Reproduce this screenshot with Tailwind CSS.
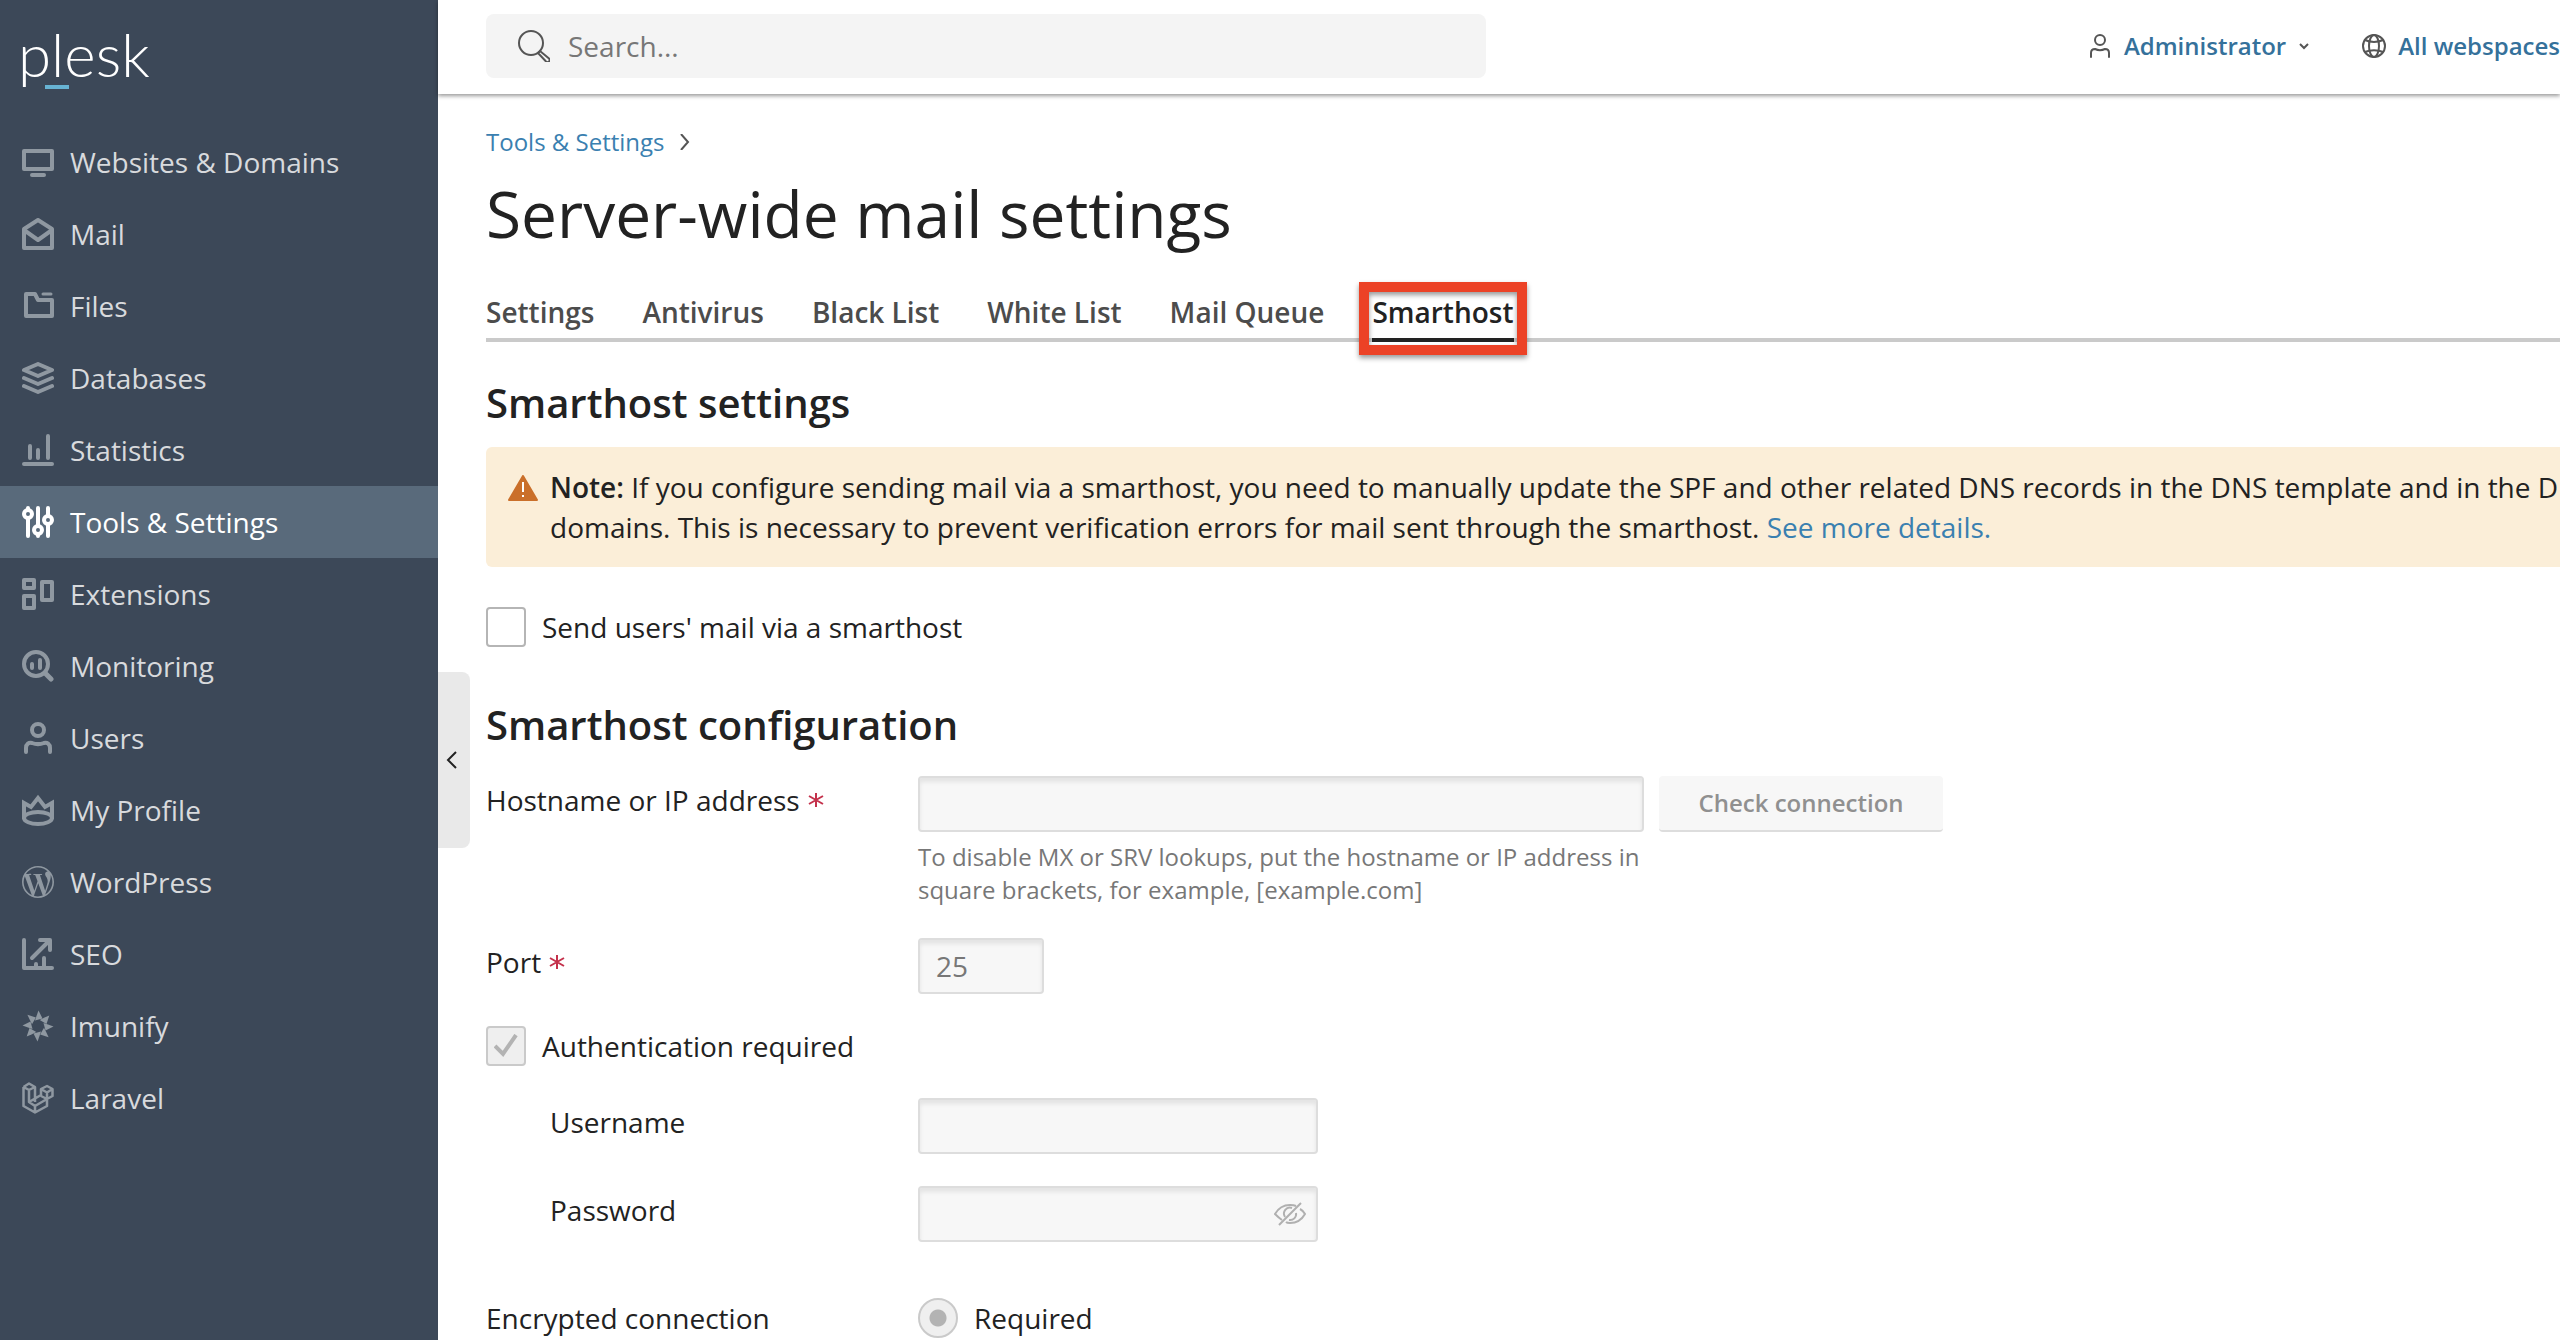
<!DOCTYPE html>
<html lang="en">
<head>
    <meta charset="UTF-8">
    <meta name="viewport" content="width=device-width, initial-scale=1.0">
    <title>Server-wide mail settings</title>
    <script src="https://cdn.jsdelivr.net/npm/@tailwindcss/browser@4"></script>
</head>
<body class="flex h-screen overflow-hidden bg-white font-['Open_Sans',sans-serif] text-[28px] leading-[40px] text-[#222222]">
    <aside class="relative w-[438px] shrink-0 bg-[#3c4858] text-[#d8dadd]">
        <a href="#" class="relative block h-[126px] pt-5 pl-[18px] font-['Lato',sans-serif] text-[60px] leading-[68px] font-light text-white">plesk<span class="absolute left-[45px] top-[85px] h-1 w-6 bg-[#67b3d3]"></span></a>
        <nav>
            <a href="#" class="flex h-[72px] items-center gap-4 pl-[22px]">
                <svg class="size-8 text-[#8f98a1]" viewBox="0 0 32 32" fill="none" stroke="currentColor" stroke-width="4" stroke-linejoin="round" stroke-linecap="round"><path d="M2 5h28v18H2zM10 29h12"/></svg>
                Websites &amp; Domains
            </a>
            <a href="#" class="flex h-[72px] items-center gap-4 pl-[22px]">
                <svg class="size-8 text-[#8f98a1]" viewBox="0 0 32 32" fill="none" stroke="currentColor" stroke-width="4" stroke-linejoin="round"><path d="M2 11 16 2l14 9v19H2zM2 12l14 10 14-10"/></svg>
                Mail
            </a>
            <a href="#" class="flex h-[72px] items-center gap-4 pl-[22px]">
                <svg class="size-8 text-[#8f98a1]" viewBox="0 0 32 32" fill="none" stroke="currentColor" stroke-width="4" stroke-linejoin="round" stroke-linecap="round"><path d="M4 4h9l3 6h14v16H4z"/><path stroke-width="3" d="M21 4h8"/></svg>
                Files
            </a>
            <a href="#" class="flex h-[72px] items-center gap-4 pl-[22px]">
                <svg class="size-8 text-[#8f98a1]" viewBox="0 0 32 32" fill="none" stroke="currentColor" stroke-width="4" stroke-linejoin="round" stroke-linecap="round"><path d="M2 8l14-6 14 6-14 6zM2 16l14 6 14-6M2 24l14 6 14-6"/></svg>
                Databases
            </a>
            <a href="#" class="flex h-[72px] items-center gap-4 pl-[22px]">
                <svg class="size-8 text-[#8f98a1]" viewBox="0 0 32 32" fill="none" stroke="currentColor" stroke-width="4" stroke-linecap="round"><path d="M2 30h28M8 12v12M16 16v8M26 2v22"/></svg>
                Statistics
            </a>
            <a href="#" class="flex h-[72px] items-center gap-4 bg-[#596a7b] pl-[22px] text-white">
                <svg class="size-8" viewBox="0 0 32 32" fill="none" stroke="currentColor" stroke-width="4" stroke-linecap="round"><path d="M6 2v1M6 13v17M16 2v17M16 29v1M26 2v7M26 19v11"/><circle cx="6" cy="8" r="4"/><circle cx="16" cy="24" r="4"/><circle cx="26" cy="14" r="4"/></svg>
                Tools &amp; Settings
            </a>
            <a href="#" class="flex h-[72px] items-center gap-4 pl-[22px]">
                <svg class="size-8 text-[#8f98a1]" viewBox="0 0 32 32" fill="none" stroke="currentColor" stroke-width="4" stroke-linejoin="round"><path d="M2 2h10v8H2zM2 18h10v12H2zM20 4h10v18H20z"/></svg>
                Extensions
            </a>
            <a href="#" class="flex h-[72px] items-center gap-4 pl-[22px]">
                <svg class="size-8 text-[#8f98a1]" viewBox="0 0 32 32" fill="none" stroke="currentColor" stroke-width="4" stroke-linecap="round"><circle cx="14" cy="14" r="12"/><path d="M10 14v4M18 10v8"/><path stroke-width="5" d="M24 24l5 5"/></svg>
                Monitoring
            </a>
            <a href="#" class="flex h-[72px] items-center gap-4 pl-[22px]">
                <svg class="size-8 text-[#8f98a1]" viewBox="0 0 32 32" fill="none" stroke="currentColor" stroke-width="4" stroke-linecap="round"><circle cx="16" cy="8" r="6"/><path d="M4 30v-4c0-4 3-6 6-5 4 1.500 8 1.500 12 0 3-1 6 1 6 5v4"/></svg>
                Users
            </a>
            <a href="#" class="flex h-[72px] items-center gap-4 pl-[22px]">
                <svg class="size-8 text-[#8f98a1]" viewBox="0 0 32 32" fill="none" stroke="currentColor" stroke-width="4"><path d="M2 25V9l7 4 7-9 7 9 7-4v16"/><ellipse cx="16" cy="24" rx="14" ry="6"/></svg>
                My Profile
            </a>
            <a href="#" class="flex h-[72px] items-center gap-4 pl-[22px]">
                <svg class="size-8 text-[#8f98a1]" viewBox="0 0 24 24" fill="currentColor"><path d="M21.469 6.825c.84 1.537 1.318 3.3 1.318 5.175 0 3.979-2.156 7.456-5.363 9.325l3.295-9.527c.615-1.54.82-2.771.82-3.864 0-.405-.026-.78-.07-1.11m-7.981.105c.647-.03 1.232-.105 1.232-.105.582-.075.514-.93-.067-.899 0 0-1.755.135-2.88.135-1.064 0-2.85-.15-2.85-.15-.585-.03-.661.855-.075.885 0 0 .54.061 1.125.09l1.68 4.605-2.37 7.08L5.354 6.9c.649-.03 1.234-.1 1.234-.1.585-.075.516-.93-.065-.896 0 0-1.746.138-2.874.138-.2 0-.438-.008-.69-.015C4.911 3.15 8.235 1.215 12 1.215c2.809 0 5.365 1.072 7.286 2.833-.046-.003-.091-.009-.141-.009-1.06 0-1.812.923-1.812 1.914 0 .89.513 1.643 1.06 2.531.411.72.89 1.643.89 2.977 0 .915-.354 1.994-.821 3.479l-1.075 3.585-3.9-11.61.001.014zM12 22.784c-1.059 0-2.081-.153-3.048-.437l3.237-9.406 3.315 9.087c.024.053.05.101.078.149-1.12.393-2.325.609-3.582.609M1.211 12c0-1.564.336-3.05.935-4.39L7.29 21.709C3.694 19.96 1.212 16.271 1.211 12M12 0C5.385 0 0 5.385 0 12s5.385 12 12 12 12-5.385 12-12S18.615 0 12 0"/></svg>
                WordPress
            </a>
            <a href="#" class="flex h-[72px] items-center gap-4 pl-[22px]">
                <svg class="size-8 text-[#8f98a1]" viewBox="0 0 32 32" fill="none" stroke="currentColor" stroke-width="4" stroke-linejoin="round" stroke-linecap="round"><path d="M2 2v28h28M18 2h10v10M27 3 10 20M14 26v3M22 20v9"/></svg>
                SEO
            </a>
            <a href="#" class="flex h-[72px] items-center gap-4 pl-[22px]">
                <svg class="size-8 text-[#8f98a1]" viewBox="-16 -16 32 32" fill="currentColor">
                    <path id="ray" d="M.5-15.500 4.500-7.500-3-5.500-1.500-10z"/>
                    <use href="#ray" transform="rotate(45)"/><use href="#ray" transform="rotate(90)"/><use href="#ray" transform="rotate(135)"/><use href="#ray" transform="rotate(180)"/><use href="#ray" transform="rotate(225)"/><use href="#ray" transform="rotate(270)"/><use href="#ray" transform="rotate(315)"/>
                </svg>
                Imunify
            </a>
            <a href="#" class="flex h-[72px] items-center gap-4 pl-[22px]">
                <svg class="size-8 text-[#8f98a1]" viewBox="0 0 32 32" fill="none" stroke="currentColor" stroke-width="2.500" stroke-linejoin="round"><path d="M1.500 5 7 1.500 13 5v15M1.500 5v19l11.500 6.500L25 24v-7M1.500 5 7 8l6-3M7 8v12l6 4 12-7M7 20l12-7M13 24v6M19 14V7l6-3 5.500 3v7L25 17l-6-3M19 7l6 3.500L30.500 7M25 10v7"/></svg>
                Laravel
            </a>
        </nav>
    </aside>

    <div class="relative flex min-w-0 flex-1 flex-col">
        <button type="button" aria-label="Collapse sidebar" class="absolute left-0 top-[672px] flex h-44 w-8 items-center rounded-r-lg bg-[#e9e9e9] pl-2">
            <svg class="h-5 w-3" viewBox="0 0 12 20" fill="none" stroke="#222222" stroke-width="2"><path d="M10 2 2 10l8 8"/></svg>
        </button>

        <header class="flex h-[94px] shrink-0 items-center justify-between pb-0.5 pl-12 shadow-[0_2px_4px_rgba(0,0,0,0.4)]">
            <label class="flex h-16 w-[1000px] items-center gap-[18px] rounded-lg bg-[#f4f4f4] pl-8">
                <svg class="size-8" viewBox="0 0 32 32" fill="none" stroke="#555555" stroke-width="2"><circle cx="13" cy="13" r="12"/><path d="M20 23l2-2 9 7.500a2 2 0 0 1-3 3z"/></svg>
                <input type="search" placeholder="Search..." aria-label="Search" class="flex-1 bg-transparent outline-none placeholder:text-[#777777]">
            </label>
            <div class="flex shrink-0 items-center text-2xl font-semibold text-[#35719b]">
                <button type="button" class="flex items-center">
                    <svg class="mr-3 size-6" viewBox="0 0 24 24" fill="none" stroke="#555555" stroke-width="2" stroke-linecap="round"><circle cx="12" cy="6" r="5"/><path d="M3 23v-4c0-3 2-4 4-4 3 1.500 7 1.500 10 0 2 0 4 1 4 4v4"/></svg>
                    Administrator
                    <svg class="ml-3 size-3" viewBox="0 0 12 12" fill="none" stroke="#555555" stroke-width="2"><path d="M2 4l4 4 4-4"/></svg>
                </button>
                <a href="#" class="ml-13 flex items-center gap-3">
                    <svg class="size-6" viewBox="0 0 24 24" fill="none" stroke="#555555" stroke-width="2"><circle cx="12" cy="12" r="11"/><ellipse cx="12" cy="12" rx="5" ry="11"/><path d="M3 6c5 2.500 13 2.500 18 0M3 18c5-2.500 13-2.500 18 0"/></svg>
                    All webspaces
                </a>
            </div>
        </header>

        <main class="pl-12">
            <div class="mt-7 flex items-center gap-3.5 text-2xl leading-10">
                <a href="#" class="text-[#3a80b0]">Tools &amp; Settings</a>
                <svg class="h-4 w-3" viewBox="0 0 12 16" fill="none" stroke="#555555" stroke-width="2"><path d="M2 0l7 8-7 8"/></svg>
            </div>
            <h1 class="mt-3 text-[64px] leading-[80px]">Server-wide mail settings</h1>

            <nav class="mt-[38px] flex gap-12 border-b-4 border-[#cacaca] font-semibold text-[#4c4c4c]">
                <a href="#" class="pb-1.5">Settings</a>
                <a href="#" class="pb-1.5">Antivirus</a>
                <a href="#" class="pb-1.5">Black List</a>
                <a href="#" class="pb-1.5">White List</a>
                <a href="#" class="pb-1.5">Mail Queue</a>
                <a href="#" class="relative -mb-1 border-b-4 border-[#222222] pb-1.5 text-[#222222]">Smarthost<span class="absolute -inset-x-[13px] -top-[10px] -bottom-[17px] border-10 border-[#ec4226] shadow-[0_3px_5px_rgba(0,0,0,0.4),inset_0_3px_5px_rgba(0,0,0,0.4)]"></span></a>
            </nav>

            <h2 class="mt-[35px] text-[40px] font-semibold leading-[52px]">Smarthost settings</h2>
            <div class="mt-[18px] flex w-max gap-3 rounded-md bg-[#fbeed8] py-5 pr-6 pl-[22px]">
                <svg class="mt-2 h-[26px] w-[30px] shrink-0" viewBox="0 0 30 26"><path fill="#ca6f2a" stroke="#ca6f2a" stroke-width="2" stroke-linejoin="round" d="M15 1 29 25H1z"/><path stroke="#ffffff" stroke-width="2" d="M15 7v10M15 20v2"/></svg>
                <p class="whitespace-nowrap"><b class="font-semibold">Note:</b> If you configure sending mail via a smarthost, you need to manually update the SPF and other related DNS records in the DNS template and in the DNS zones of<br>domains. This is necessary to prevent verification errors for mail sent through the smarthost. <a href="#" class="text-[#3a80b0]">See more details.</a></p>
            </div>

            <label class="mt-10 flex items-center gap-4">
                <input type="checkbox" class="size-10 appearance-none rounded-sm border-2 border-[#b5b5b5] bg-white">
                Send users' mail via a smarthost
            </label>

            <h2 class="mt-[52px] text-[40px] font-semibold leading-[52px]">Smarthost configuration</h2>
            <div class="mt-[25px] grid grid-cols-[432px_1fr] items-start">
                <label for="host" class="flex items-center gap-2 pt-1">
                    Hostname or IP address
                    <svg class="size-4" viewBox="0 0 16 16" role="img" aria-label="required" stroke="#c4314b" stroke-width="2"><path d="M8 1v14M1 4l14 8M15 4 1 12"/></svg>
                </label>
                <div>
                    <div class="flex gap-[15px]">
                        <input id="host" type="text" disabled class="h-14 w-[726px] rounded-sm border-2 border-[#dddddd] bg-[#f7f7f7] px-4 shadow-[inset_0_4px_4px_rgba(0,0,0,0.08)]">
                        <button type="button" disabled class="h-14 w-[284px] rounded-sm border-b-2 border-[#dddddd] bg-[#f7f7f7] text-2xl font-semibold text-[#909090]">Check connection</button>
                    </div>
                    <p class="mt-2 w-[726px] text-2xl leading-[33px] text-[#777777]">To disable MX or SRV lookups, put the hostname or IP address in square brackets, for example, [example.com]</p>
                </div>
            </div>
            <div class="mt-8 grid grid-cols-[432px_1fr] items-start">
                <label for="port" class="flex items-center gap-2 pt-1">
                    Port
                    <svg class="size-4" viewBox="0 0 16 16" role="img" aria-label="required" stroke="#c4314b" stroke-width="2"><path d="M8 1v14M1 4l14 8M15 4 1 12"/></svg>
                </label>
                <input id="port" type="text" value="25" disabled class="h-14 w-[126px] rounded-sm border-2 border-[#dddddd] bg-[#f7f7f7] px-4 text-[#777777] shadow-[inset_0_4px_4px_rgba(0,0,0,0.08)]">
            </div>
            <div class="relative mt-8">
                <label class="flex items-center gap-4">
                    <input type="checkbox" checked disabled class="size-10 appearance-none rounded-sm border-2 border-[#cacaca] bg-[#efefef]">
                    Authentication required
                </label>
                <svg class="absolute left-2 top-2 size-6" viewBox="0 0 24 24" fill="none" stroke="#b3b3b3" stroke-width="4"><path d="M1 12l8 8L22 1"/></svg>
            </div>
            <div class="mt-8 grid grid-cols-[432px_1fr] items-start">
                <label for="user" class="pt-1 pl-16">Username</label>
                <input id="user" type="text" disabled class="h-14 w-[400px] rounded-sm border-2 border-[#dddddd] bg-[#f7f7f7] px-4 shadow-[inset_0_4px_4px_rgba(0,0,0,0.08)]">
            </div>
            <div class="mt-8 grid grid-cols-[432px_1fr] items-start">
                <label for="password" class="pt-1 pl-16">Password</label>
                <div class="relative w-[400px]">
                    <input id="password" type="password" disabled class="block h-14 w-full rounded-sm border-2 border-[#dddddd] bg-[#f7f7f7] px-4 shadow-[inset_0_4px_4px_rgba(0,0,0,0.08)]">
                    <button type="button" disabled aria-label="Show password" class="absolute right-3 top-4"><svg class="h-6 w-8" viewBox="0 0 32 24" fill="none" stroke="#b0b0b0" stroke-width="2"><path d="M8 18C5 16 3 14 1 12 5 5 10 3 16 3c2 0 4 0 6 1M26 7c2 1 4 3 5 5-4 7-9 9-15 9-1 0-3 0-4-1M5 23 27 1"/><path d="M11 15a6 6 0 0 1 7-9M22 11a6 6 0 0 1-7 7"/></svg></button>
                </div>
            </div>
            <div class="mt-14 grid grid-cols-[432px_1fr] items-start">
                <span id="encrypted">Encrypted connection</span>
                <div role="radiogroup" aria-labelledby="encrypted">
                    <label class="flex items-center gap-4">
                        <input type="radio" checked disabled class="size-10 appearance-none rounded-full border-2 border-[#cacaca] bg-[radial-gradient(circle,#b3b3b3_8px,#efefef_9px)]">
                        Required
                    </label>
                </div>
            </div>
        </main>
    </div>
</body>
</html>
